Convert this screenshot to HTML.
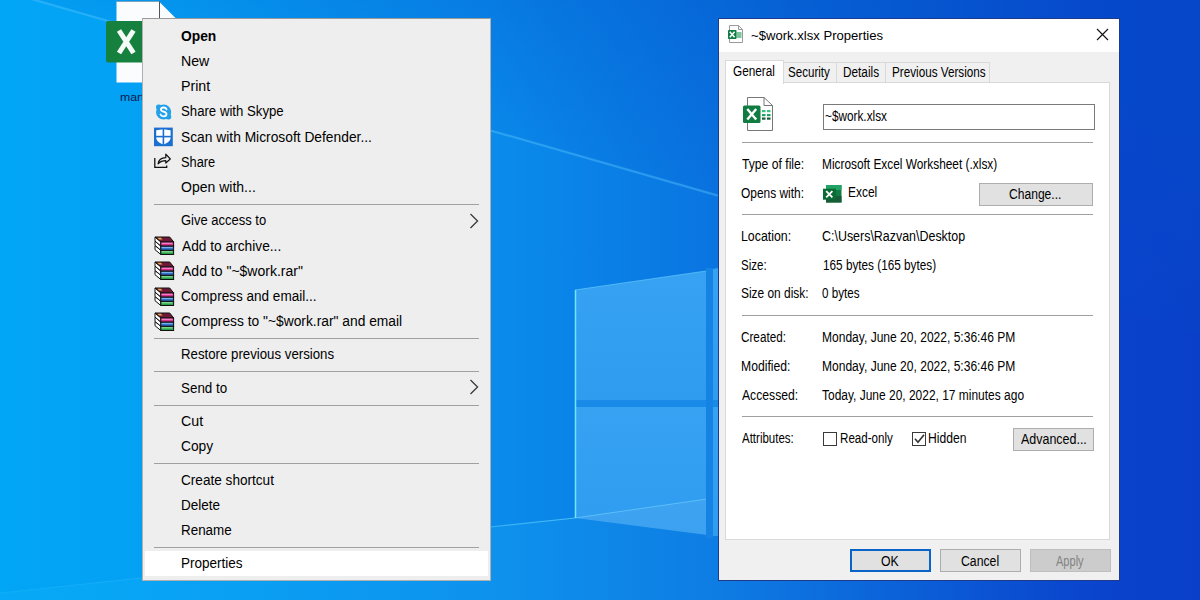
<!DOCTYPE html>
<html><head><meta charset="utf-8">
<style>
*{margin:0;padding:0;box-sizing:border-box}
html,body{width:1200px;height:600px;overflow:hidden}
body{position:relative;font-family:"Liberation Sans",sans-serif;background:#0a7fe0}
.abs{position:absolute}
#lbl{left:120px;top:91px;font-size:12px;color:#17276a;white-space:nowrap}
#menu{left:142px;top:18px;width:349px;height:563px;background:#eeeeee;border:1px solid #b0b0b0;border-top-color:#9a9a9a}
.mi{position:absolute;left:38px;height:25px;font-size:13.5px;color:#000;white-space:nowrap;line-height:25px}
.sep{position:absolute;left:11px;width:325px;height:1px;background:#a0a0a0}
.ic{position:absolute}
#hl{position:absolute;left:2px;width:343px;background:#fff}
.t{position:absolute;white-space:nowrap;color:#000;line-height:1;transform-origin:0 0}
.btn{background:#e1e1e1;border:1px solid #adadad}
.cb{border:1.4px solid #3a3a3a;background:#fff}
</style></head><body>
<svg class="abs" style="left:0;top:0" width="1200" height="600" viewBox="0 0 1200 600">
  <defs>
    <linearGradient id="g1" x1="0" y1="0" x2="1200" y2="0" gradientUnits="userSpaceOnUse">
      <stop offset="0" stop-color="#02a6f6"/>
      <stop offset="0.12" stop-color="#04a0f4"/>
      <stop offset="0.41" stop-color="#0a8cec"/>
      <stop offset="0.6" stop-color="#0a74e0"/>
      <stop offset="0.93" stop-color="#0a42cc"/>
      <stop offset="1" stop-color="#0a40c9"/>
    </linearGradient>
    <linearGradient id="gtop" x1="600" y1="162" x2="660" y2="-50" gradientUnits="userSpaceOnUse">
      <stop offset="0" stop-color="#0050c8" stop-opacity="0.08"/>
      <stop offset="1" stop-color="#0050c8" stop-opacity="0.42"/>
    </linearGradient>
    <linearGradient id="pane" x1="0" y1="0" x2="0" y2="1">
      <stop offset="0" stop-color="#37a2f2"/>
      <stop offset="1" stop-color="#309cf0"/>
    </linearGradient>
  </defs>
  <rect width="1200" height="600" fill="url(#g1)"/>
  <polygon points="0,-10 1200,333 1200,0 0,0" fill="url(#gtop)"/>
  <line x1="0" y1="-10" x2="718" y2="195.6" stroke="#5ac8ff" stroke-opacity="0.4" stroke-width="2.2"/>
  <defs><linearGradient id="flf" x1="0" y1="0" x2="1200" y2="0" gradientUnits="userSpaceOnUse"><stop offset="0" stop-color="#30c8ff" stop-opacity="0.1"/><stop offset="0.59" stop-color="#30c8ff" stop-opacity="0.1"/><stop offset="0.85" stop-color="#30c8ff" stop-opacity="0"/></linearGradient></defs>
  <polygon points="0,593 150,577 490,527 575,518 707,535 1200,600 0,600" fill="url(#flf)"/>
  <defs><linearGradient id="fl" x1="0" y1="0" x2="575" y2="0" gradientUnits="userSpaceOnUse"><stop offset="0" stop-color="#60d8ff" stop-opacity="0.12"/><stop offset="0.7" stop-color="#60d8ff" stop-opacity="0.3"/><stop offset="1" stop-color="#70e0ff" stop-opacity="0.6"/></linearGradient></defs>
  <polyline points="0,593 150,577 490,527 575,518" fill="none" stroke="url(#fl)" stroke-width="1.2"/>
  <polygon points="575,290 706,271 706,400 575,400" fill="url(#pane)"/>
  <polygon points="575,407 707,407 707,535 575,518" fill="url(#pane)"/>
  <polygon points="575,518 707,499 707,535" fill="#ffffff" fill-opacity="0.06"/>
  <line x1="575" y1="518" x2="707" y2="499" stroke="#7fe0ff" stroke-opacity="0.5" stroke-width="1"/>
  <polygon points="713,269 718,268 718,400 713,400" fill="url(#pane)"/>
  <polygon points="713,407 718,407 718,536 713,536" fill="url(#pane)"/>
  <rect x="575" y="400" width="143" height="7" fill="#1a8ae8"/>
  <rect x="706" y="268" width="7" height="270" fill="#1583e4"/>
  <line x1="575.5" y1="290" x2="575.5" y2="518" stroke="#70e6ff" stroke-width="1.5"/>
  <line x1="575" y1="290" x2="706" y2="271" stroke="#6ad0ff" stroke-opacity="0.6" stroke-width="1"/>
</svg>
<svg class="abs" style="left:100px;top:0px" width="80" height="110" viewBox="0 0 80 110">
<path d="M16.5 1.5 H59 L76 18.5 V82.5 H16.5 Z" fill="#fbfcfd"/>
<path d="M16.5 1.5 H59.5" fill="none" stroke="#7a8a99" stroke-width="1" stroke-opacity="0.6"/>
<path d="M59.5 1.5 V18.5" fill="none" stroke="#555" stroke-width="1"/>
<rect x="6" y="21" width="40" height="41.5" rx="2" fill="#16813f"/>
<path d="M19 30.5 L33.5 53 M33.5 30.5 L19 53" stroke="#f4fbf6" stroke-width="5"/>
</svg>
<div class="t" style="left:119.60px;top:92.17px;font-size:11.5px;transform:scaleX(1.0661);color:#0c1850">mart</div>
<div id="menu" class="abs">
<div class="sep" style="top:184.8px"></div>
<div class="sep" style="top:318.9px"></div>
<div class="sep" style="top:352.2px"></div>
<div class="sep" style="top:385.5px"></div>
<div class="sep" style="top:444.0px"></div>
<div class="sep" style="top:527.7px"></div>
<div id="hl" style="top:532.2px;height:25px"></div>
<svg class="ic" style="left:11px;top:84px" width="19" height="18" viewBox="0 0 19 18">
<circle cx="9.6" cy="9" r="7.6" fill="#22a0e8"/>
<rect x="2" y="1.4" width="5.5" height="5.5" rx="2.4" fill="#22a0e8"/>
<rect x="11.7" y="11.1" width="5.5" height="5.5" rx="2.4" fill="#22a0e8"/>
<path d="M12.6 6.3 C12.1 5.1 11 4.5 9.6 4.5 C8 4.5 6.9 5.3 6.9 6.5 C6.9 9.2 12.5 8.1 12.5 11.1 C12.5 12.5 11.3 13.4 9.6 13.4 C8 13.4 6.9 12.6 6.5 11.5" fill="none" stroke="#fff" stroke-width="1.8" stroke-linecap="round"/>
</svg>
<svg class="ic" style="left:10px;top:108px" width="20" height="20" viewBox="0 0 20 20">
<rect x="1" y="0.6" width="18.8" height="18.6" fill="#1a6fd0"/>
<path d="M3.2 3.2 L10.4 2.2 L17.6 3.2 V10.2 C17.6 13.6 14.6 16.2 10.4 17.4 C6.2 16.2 3.2 13.6 3.2 10.2 Z" fill="#fff"/>
<rect x="9.6" y="1.5" width="1.6" height="17" fill="#1a6fd0"/>
<rect x="2.5" y="8.8" width="15.8" height="1.6" fill="#1a6fd0"/>
</svg>
<svg class="ic" style="left:11px;top:134px" width="19" height="17" viewBox="0 0 19 17">
<path d="M0.8 4.9 V14.4 H12.7 V12.6" fill="none" stroke="#111" stroke-width="1.3"/>
<path d="M4.1 10.8 C4.6 7 7.4 4.9 11.8 4.7 V1.2 L16.3 6 L11.8 10 V7.7 C8.6 7.7 6.2 8.6 4.1 10.8 Z" fill="none" stroke="#111" stroke-width="1.2" stroke-linejoin="round"/>
</svg>
<svg class="ic" style="left:10.5px;top:217px" width="21" height="20" viewBox="0 0 21 20">
<polygon points="1,9.6 6.8,14.4 6.8,18.5 1,13.7" fill="#fff" stroke="#111" stroke-width="1"/>
<rect x="6.8" y="14.4" width="12.8" height="4.1" fill="#27a04a" stroke="#111" stroke-width="1"/>
<rect x="7.6" y="15.2" width="11" height="1.2" fill="#8fe09a"/>
<polygon points="1,5.3 6.8,10.1 6.8,14.2 1,9.4" fill="#fff" stroke="#111" stroke-width="1"/>
<rect x="6.8" y="10.1" width="12.8" height="4.1" fill="#2d6ec6" stroke="#111" stroke-width="1"/>
<rect x="7.6" y="10.9" width="11" height="1.2" fill="#7ab0f0"/>
<polygon points="1,1 6.8,5.8 6.8,9.9 1,5.1" fill="#fff" stroke="#111" stroke-width="1"/>
<rect x="6.8" y="5.8" width="12.8" height="4.1" fill="#d8308f" stroke="#111" stroke-width="1"/>
<rect x="7.6" y="6.6" width="11" height="1.2" fill="#ff90d0"/>
<polygon points="1,1 15.7,1 19.6,5.8 6.8,5.8" fill="#6e1836" stroke="#111" stroke-width="1"/>
<polygon points="3.5,1.8 7,1.8 8.5,3.6 5,3.6" fill="#e8a848"/>
</svg>
<svg class="ic" style="left:10.5px;top:242px" width="21" height="20" viewBox="0 0 21 20">
<polygon points="1,9.6 6.8,14.4 6.8,18.5 1,13.7" fill="#fff" stroke="#111" stroke-width="1"/>
<rect x="6.8" y="14.4" width="12.8" height="4.1" fill="#27a04a" stroke="#111" stroke-width="1"/>
<rect x="7.6" y="15.2" width="11" height="1.2" fill="#8fe09a"/>
<polygon points="1,5.3 6.8,10.1 6.8,14.2 1,9.4" fill="#fff" stroke="#111" stroke-width="1"/>
<rect x="6.8" y="10.1" width="12.8" height="4.1" fill="#2d6ec6" stroke="#111" stroke-width="1"/>
<rect x="7.6" y="10.9" width="11" height="1.2" fill="#7ab0f0"/>
<polygon points="1,1 6.8,5.8 6.8,9.9 1,5.1" fill="#fff" stroke="#111" stroke-width="1"/>
<rect x="6.8" y="5.8" width="12.8" height="4.1" fill="#d8308f" stroke="#111" stroke-width="1"/>
<rect x="7.6" y="6.6" width="11" height="1.2" fill="#ff90d0"/>
<polygon points="1,1 15.7,1 19.6,5.8 6.8,5.8" fill="#6e1836" stroke="#111" stroke-width="1"/>
<polygon points="3.5,1.8 7,1.8 8.5,3.6 5,3.6" fill="#e8a848"/>
</svg>
<svg class="ic" style="left:10.5px;top:267.5px" width="21" height="20" viewBox="0 0 21 20">
<polygon points="1,9.6 6.8,14.4 6.8,18.5 1,13.7" fill="#fff" stroke="#111" stroke-width="1"/>
<rect x="6.8" y="14.4" width="12.8" height="4.1" fill="#27a04a" stroke="#111" stroke-width="1"/>
<rect x="7.6" y="15.2" width="11" height="1.2" fill="#8fe09a"/>
<polygon points="1,5.3 6.8,10.1 6.8,14.2 1,9.4" fill="#fff" stroke="#111" stroke-width="1"/>
<rect x="6.8" y="10.1" width="12.8" height="4.1" fill="#2d6ec6" stroke="#111" stroke-width="1"/>
<rect x="7.6" y="10.9" width="11" height="1.2" fill="#7ab0f0"/>
<polygon points="1,1 6.8,5.8 6.8,9.9 1,5.1" fill="#fff" stroke="#111" stroke-width="1"/>
<rect x="6.8" y="5.8" width="12.8" height="4.1" fill="#d8308f" stroke="#111" stroke-width="1"/>
<rect x="7.6" y="6.6" width="11" height="1.2" fill="#ff90d0"/>
<polygon points="1,1 15.7,1 19.6,5.8 6.8,5.8" fill="#6e1836" stroke="#111" stroke-width="1"/>
<polygon points="3.5,1.8 7,1.8 8.5,3.6 5,3.6" fill="#e8a848"/>
</svg>
<svg class="ic" style="left:10.5px;top:293px" width="21" height="20" viewBox="0 0 21 20">
<polygon points="1,9.6 6.8,14.4 6.8,18.5 1,13.7" fill="#fff" stroke="#111" stroke-width="1"/>
<rect x="6.8" y="14.4" width="12.8" height="4.1" fill="#27a04a" stroke="#111" stroke-width="1"/>
<rect x="7.6" y="15.2" width="11" height="1.2" fill="#8fe09a"/>
<polygon points="1,5.3 6.8,10.1 6.8,14.2 1,9.4" fill="#fff" stroke="#111" stroke-width="1"/>
<rect x="6.8" y="10.1" width="12.8" height="4.1" fill="#2d6ec6" stroke="#111" stroke-width="1"/>
<rect x="7.6" y="10.9" width="11" height="1.2" fill="#7ab0f0"/>
<polygon points="1,1 6.8,5.8 6.8,9.9 1,5.1" fill="#fff" stroke="#111" stroke-width="1"/>
<rect x="6.8" y="5.8" width="12.8" height="4.1" fill="#d8308f" stroke="#111" stroke-width="1"/>
<rect x="7.6" y="6.6" width="11" height="1.2" fill="#ff90d0"/>
<polygon points="1,1 15.7,1 19.6,5.8 6.8,5.8" fill="#6e1836" stroke="#111" stroke-width="1"/>
<polygon points="3.5,1.8 7,1.8 8.5,3.6 5,3.6" fill="#e8a848"/>
</svg>
<svg class="ic" style="left:326px;top:193.5px" width="10" height="16" viewBox="0 0 10 16"><path d="M1.5 1 L8.6 8 L1.5 15" fill="none" stroke="#333" stroke-width="1.2"/></svg>
<svg class="ic" style="left:326px;top:360px" width="10" height="16" viewBox="0 0 10 16"><path d="M1.5 1 L8.6 8 L1.5 15" fill="none" stroke="#333" stroke-width="1.2"/></svg>
</div>
<div class="t" style="left:181.45px;top:29.82px;font-size:13.8px;transform:scaleX(1.0006);font-weight:bold;">Open</div>
<div class="t" style="left:180.87px;top:55.02px;font-size:13.8px;transform:scaleX(1.0239);">New</div>
<div class="t" style="left:180.86px;top:80.22px;font-size:13.8px;transform:scaleX(1.0299);">Print</div>
<div class="t" style="left:181.41px;top:105.42px;font-size:13.8px;transform:scaleX(0.9564);">Share with Skype</div>
<div class="t" style="left:181.38px;top:130.62px;font-size:13.8px;transform:scaleX(0.9997);">Scan with Microsoft Defender...</div>
<div class="t" style="left:181.42px;top:155.82px;font-size:13.8px;transform:scaleX(0.9287);">Share</div>
<div class="t" style="left:181.37px;top:181.02px;font-size:13.8px;transform:scaleX(1.0159);">Open with...</div>
<div class="t" style="left:181.35px;top:214.32px;font-size:13.8px;transform:scaleX(0.9415);">Give access to</div>
<div class="t" style="left:182.00px;top:239.52px;font-size:13.8px;transform:scaleX(0.9953);">Add to archive...</div>
<div class="t" style="left:182.00px;top:264.72px;font-size:13.8px;transform:scaleX(1.0157);">Add to "~$work.rar"</div>
<div class="t" style="left:181.32px;top:289.92px;font-size:13.8px;transform:scaleX(0.9819);">Compress and email...</div>
<div class="t" style="left:181.31px;top:315.12px;font-size:13.8px;transform:scaleX(1.0005);">Compress to "~$work.rar" and email</div>
<div class="t" style="left:180.94px;top:348.42px;font-size:13.8px;transform:scaleX(0.9599);">Restore previous versions</div>
<div class="t" style="left:181.40px;top:381.72px;font-size:13.8px;transform:scaleX(0.9705);">Send to</div>
<div class="t" style="left:181.29px;top:415.02px;font-size:13.8px;transform:scaleX(1.0290);">Cut</div>
<div class="t" style="left:181.31px;top:440.22px;font-size:13.8px;transform:scaleX(0.9990);">Copy</div>
<div class="t" style="left:181.32px;top:473.52px;font-size:13.8px;transform:scaleX(0.9854);">Create shortcut</div>
<div class="t" style="left:180.92px;top:498.72px;font-size:13.8px;transform:scaleX(0.9802);">Delete</div>
<div class="t" style="left:180.93px;top:523.92px;font-size:13.8px;transform:scaleX(0.9715);">Rename</div>
<div class="t" style="left:180.92px;top:557.22px;font-size:13.8px;transform:scaleX(0.9798);">Properties</div>
<div class="abs" style="left:718px;top:18px;width:402px;height:563px;background:#f0f0f0;border:1px solid #1f3a8a"></div>
<div class="abs" style="left:719px;top:19px;width:400px;height:33px;background:#fff"></div>
<svg class="abs" style="left:726px;top:23px" width="20" height="22" viewBox="0 0 20 22">
<path d="M3.5 2.5 H12.5 L16.5 6.5 V19.5 H3.5 Z" fill="#fff" stroke="#9a9a9a" stroke-width="1"/>
<path d="M12.5 2.5 V6.5 H16.5" fill="none" stroke="#9a9a9a" stroke-width="1"/>
<rect x="10.5" y="9" width="5" height="6" fill="#7cc49a"/>
<rect x="2" y="7" width="8.5" height="9" rx="0.8" fill="#107c41"/>
<path d="M3.8 8.8 L8.6 14.2 M8.6 8.8 L3.8 14.2" stroke="#fff" stroke-width="1.6"/>
</svg>
<div class="t" style="left:751.31px;top:29.06px;font-size:13.4px;transform:scaleX(0.9779);">~$work.xlsx Properties</div>
<svg class="abs" style="left:1096px;top:28px" width="13" height="13" viewBox="0 0 13 13"><path d="M1 1 L12 12 M12 1 L1 12" stroke="#111" stroke-width="1.1"/></svg>
<div class="abs" style="left:783px;top:62px;width:54px;height:21px;background:#f0f0f0;border:1px solid #d9d9d9;border-bottom:none"></div>
<div class="abs" style="left:836px;top:62px;width:50px;height:21px;background:#f0f0f0;border:1px solid #d9d9d9;border-bottom:none"></div>
<div class="abs" style="left:885px;top:62px;width:105px;height:21px;background:#f0f0f0;border:1px solid #d9d9d9;border-bottom:none"></div>
<div class="abs" style="left:725px;top:82px;width:385px;height:458px;background:#fff;border:1px solid #d9d9d9"></div>
<div class="abs" style="left:725px;top:60px;width:59px;height:24px;background:#fff;border:1px solid #d9d9d9;border-bottom:none"></div>
<div class="t" style="left:732.91px;top:63.65px;font-size:14.0px;transform:scaleX(0.8430);">General</div>
<div class="t" style="left:787.88px;top:65.15px;font-size:14.0px;transform:scaleX(0.8275);">Security</div>
<div class="t" style="left:843.06px;top:65.15px;font-size:14.0px;transform:scaleX(0.8431);">Details</div>
<div class="t" style="left:892.06px;top:65.15px;font-size:14.0px;transform:scaleX(0.8356);">Previous Versions</div>
<svg class="abs" style="left:740px;top:95px" width="36" height="38" viewBox="0 0 36 38">
<path d="M7.5 2.5 H24 L32.5 10.5 V35.5 H7.5 Z" fill="#fff" stroke="#777" stroke-width="1"/>
<path d="M24 2.5 V10.5 H32.5" fill="none" stroke="#777" stroke-width="1"/>
<rect x="22" y="15" width="3.5" height="2.2" fill="#33c481"/><rect x="27" y="15" width="3.5" height="2.2" fill="#33c481"/>
<rect x="22" y="19" width="3.5" height="2.2" fill="#21a366"/><rect x="27" y="19" width="3.5" height="2.2" fill="#21a366"/>
<rect x="22" y="22.5" width="3.5" height="2.2" fill="#185c37"/><rect x="27" y="22.5" width="3.5" height="2.2" fill="#185c37"/>
<rect x="3" y="10.5" width="17.5" height="17.5" rx="1.5" fill="#107c41"/>
<path d="M7.3 14 L16.2 24.5 M16.2 14 L7.3 24.5" stroke="#fff" stroke-width="2.4"/>
</svg>
<div class="abs" style="left:823px;top:104px;width:272px;height:26px;background:#fff;border:1px solid #7a7a7a"></div>
<div class="t" style="left:825.47px;top:108.65px;font-size:14.0px;transform:scaleX(0.8428);">~$work.xlsx</div>
<div class="abs" style="left:742px;top:142px;width:351px;height:1px;background:#a0a0a0"></div>
<div class="t" style="left:741.76px;top:156.65px;font-size:14.0px;transform:scaleX(0.8686);">Type of file:</div>
<div class="t" style="left:821.85px;top:156.65px;font-size:14.0px;transform:scaleX(0.8477);">Microsoft Excel Worksheet (.xlsx)</div>
<div class="t" style="left:741.46px;top:185.65px;font-size:14.0px;transform:scaleX(0.8524);">Opens with:</div>
<svg class="abs" style="left:822px;top:184px" width="21" height="20" viewBox="0 0 21 20">
<rect x="4" y="1" width="15.5" height="17.5" fill="#107c41"/>
<rect x="4" y="1" width="15.5" height="5" fill="#21a366"/>
<rect x="4" y="12" width="15.5" height="6.5" fill="#185c37"/>
<rect x="1" y="4.7" width="13" height="11" fill="#0b6a35"/>
<path d="M4.2 7.2 L10.4 13.4 M10.4 7.2 L4.2 13.4" stroke="#fff" stroke-width="1.8"/>
</svg>
<div class="t" style="left:847.74px;top:185.25px;font-size:14.0px;transform:scaleX(0.8540);">Excel</div>
<div class="abs btn" style="left:979px;top:183px;width:114px;height:23px"></div>
<div class="t" style="left:1009.40px;top:187.15px;font-size:14.0px;transform:scaleX(0.8633);">Change...</div>
<div class="abs" style="left:742px;top:214px;width:351px;height:1px;background:#a0a0a0"></div>
<div class="t" style="left:741.01px;top:229.15px;font-size:14.0px;transform:scaleX(0.8825);">Location:</div>
<div class="t" style="left:822.18px;top:229.15px;font-size:14.0px;transform:scaleX(0.8886);">C:\Users\Razvan\Desktop</div>
<div class="t" style="left:741.48px;top:257.65px;font-size:14.0px;transform:scaleX(0.8222);">Size:</div>
<div class="t" style="left:822.52px;top:257.65px;font-size:14.0px;transform:scaleX(0.8401);">165 bytes (165 bytes)</div>
<div class="t" style="left:741.46px;top:286.15px;font-size:14.0px;transform:scaleX(0.8512);">Size on disk:</div>
<div class="t" style="left:822.34px;top:286.15px;font-size:14.0px;transform:scaleX(0.8299);">0 bytes</div>
<div class="abs" style="left:742px;top:315px;width:351px;height:1px;background:#a0a0a0"></div>
<div class="t" style="left:741.11px;top:329.65px;font-size:14.0px;transform:scaleX(0.8370);">Created:</div>
<div class="t" style="left:821.74px;top:329.65px;font-size:14.0px;transform:scaleX(0.8602);">Monday, June 20, 2022, 5:36:46 PM</div>
<div class="t" style="left:740.73px;top:358.65px;font-size:14.0px;transform:scaleX(0.8696);">Modified:</div>
<div class="t" style="left:821.74px;top:358.65px;font-size:14.0px;transform:scaleX(0.8602);">Monday, June 20, 2022, 5:36:46 PM</div>
<div class="t" style="left:741.70px;top:387.65px;font-size:14.0px;transform:scaleX(0.8692);">Accessed:</div>
<div class="t" style="left:822.46px;top:387.65px;font-size:14.0px;transform:scaleX(0.8548);">Today, June 20, 2022, 17 minutes ago</div>
<div class="abs" style="left:742px;top:416px;width:351px;height:1px;background:#a0a0a0"></div>
<div class="t" style="left:742.00px;top:430.75px;font-size:14.0px;transform:scaleX(0.8212);">Attributes:</div>
<div class="abs cb" style="left:823px;top:432px;width:14px;height:14px"></div>
<div class="t" style="left:839.77px;top:430.75px;font-size:14.0px;transform:scaleX(0.8291);">Read-only</div>
<div class="abs cb" style="left:912px;top:432px;width:14px;height:14px"></div>
<svg class="abs" style="left:912px;top:432px" width="14" height="14" viewBox="0 0 14 14"><path d="M3 6.8 L6 10.2 L12 2.8" fill="none" stroke="#333" stroke-width="1.6"/></svg>
<div class="t" style="left:928.33px;top:430.75px;font-size:14.0px;transform:scaleX(0.8666);">Hidden</div>
<div class="abs btn" style="left:1013px;top:428px;width:81px;height:23px"></div>
<div class="t" style="left:1021.00px;top:432.15px;font-size:14.0px;transform:scaleX(0.8904);">Advanced...</div>
<div class="abs btn" style="left:850px;top:549px;width:81px;height:23px;border:2px solid #0a64c8"></div>
<div class="t" style="left:881.45px;top:553.65px;font-size:14.0px;transform:scaleX(0.8736);">OK</div>
<div class="abs btn" style="left:940px;top:549px;width:81px;height:23px"></div>
<div class="t" style="left:961.09px;top:553.65px;font-size:14.0px;transform:scaleX(0.8753);">Cancel</div>
<div class="abs btn" style="left:1030px;top:549px;width:81px;height:23px;background:#cccccc;border-color:#bfbfbf"></div>
<div class="t" style="left:1056.30px;top:553.65px;font-size:14.0px;transform:scaleX(0.7886);color:#838383">Apply</div>
</body></html>
